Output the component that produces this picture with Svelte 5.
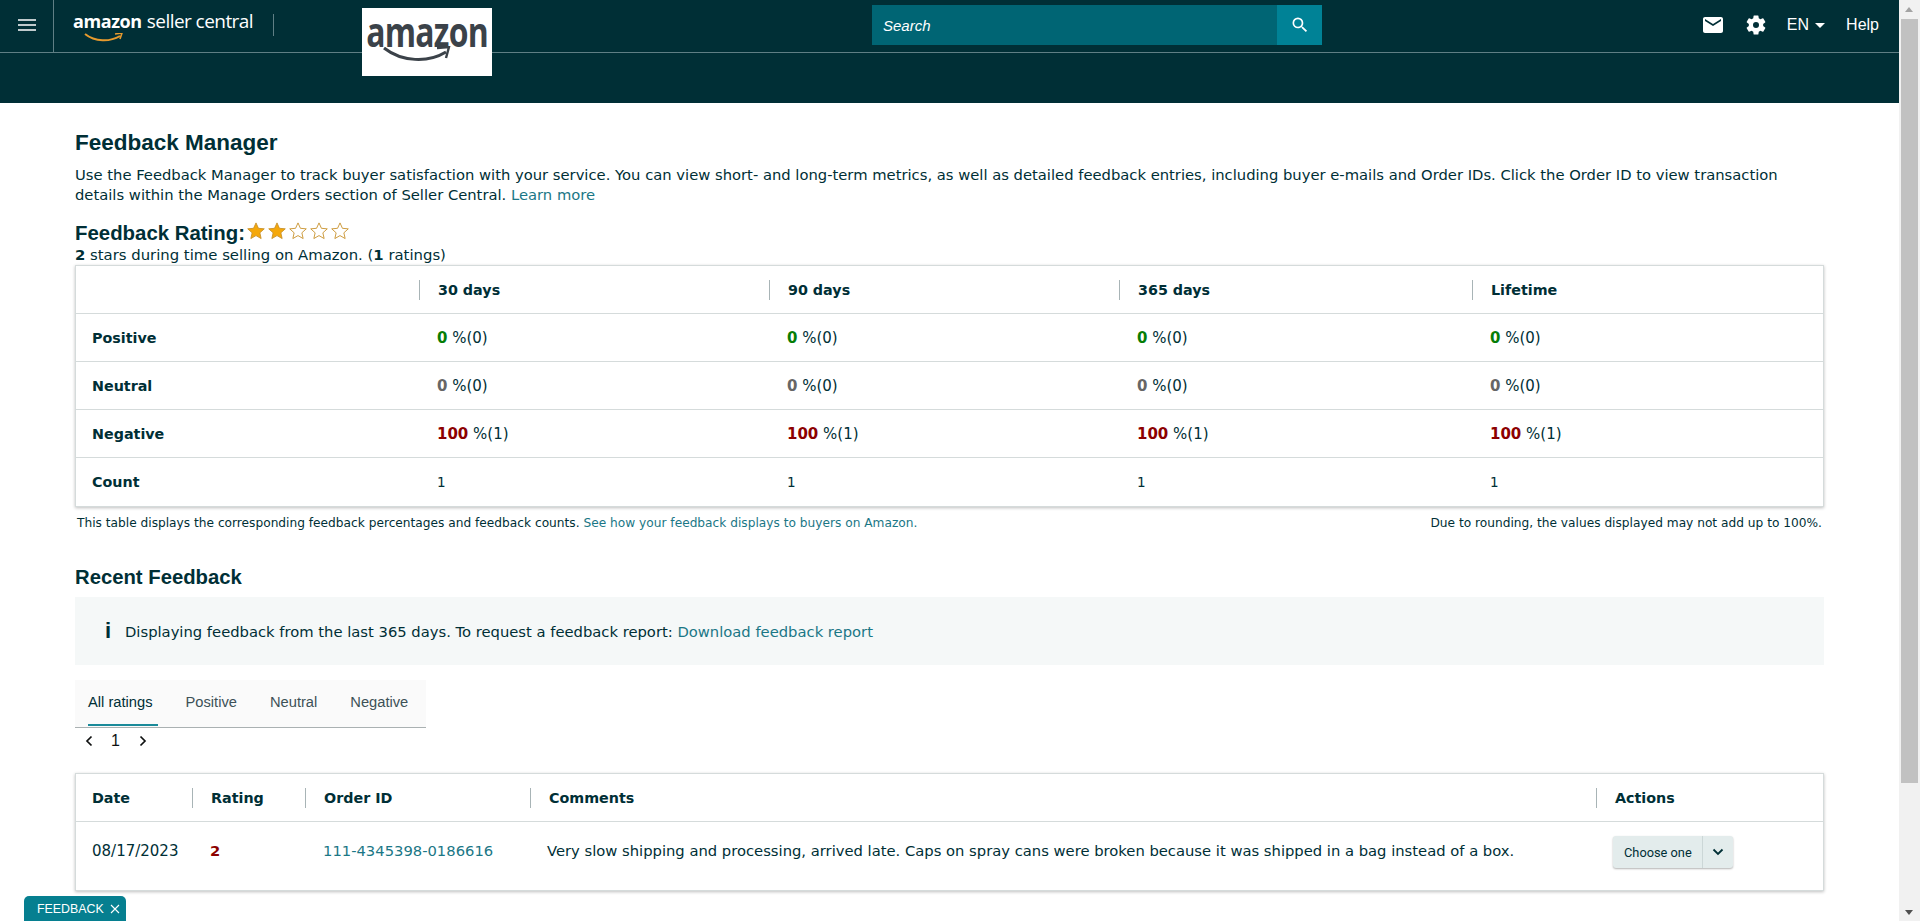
<script>
  const stars = [true, true, false, false, false];
  const periods = ["30 days", "90 days", "365 days", "Lifetime"];
  const rows = [
    { label: "Positive", value: "0", tone: "good", rest: "%(0)" },
    { label: "Neutral", value: "0", tone: "flat", rest: "%(0)" },
    { label: "Negative", value: "100", tone: "bad", rest: "%(1)" }
  ];
  const tabs = ["All ratings", "Positive", "Neutral", "Negative"];
</script>

<div class="screen">
  <div class="page">
    <header class="top">
      <div class="bar">
        <button class="menu" aria-label="Menu">
          <svg width="18" height="12" viewBox="0 0 18 12"><path d="M0 1h18M0 6h18M0 11h18" stroke="#fff" stroke-width="1.6" /></svg>
        </button>
        <div class="brand">
          <div class="wordmark">
            <span class="am">amazon</span><span class="sc">seller central</span>
            <svg class="smile" width="40" height="10" viewBox="0 0 40 10"><path d="M1 1c10 8 25 8 35 2" fill="none" stroke="#e69a2e" stroke-width="2" /><path d="M31 1l7-1-2 6" fill="none" stroke="#e69a2e" stroke-width="1.6" /></svg>
          </div>
        </div>
        <div class="logo-box">
          <span class="logo-text">amazon</span>
          <svg class="logo-smile" width="70" height="18" viewBox="0 0 70 18"><path d="M2 2c18 14 44 15 62 4" fill="none" stroke="#3b4249" stroke-width="3" /><path d="M55 2l12-1-3 11" fill="none" stroke="#3b4249" stroke-width="2.4" /></svg>
        </div>
        <div class="search">
          <span class="search-label">Search</span>
          <span class="search-btn">
            <svg width="20" height="20" viewBox="0 0 24 24"><path fill="#fff" d="M15.5 14h-.79l-.28-.27A6.47 6.47 0 0 0 16 9.5 6.5 6.5 0 1 0 9.5 16c1.61 0 3.09-.59 4.23-1.57l.27.28v.79l5 4.99L20.49 19l-4.99-5zm-6 0C7.01 14 5 11.99 5 9.5S7.01 5 9.5 5 14 7.01 14 9.5 11.99 14 9.5 14z" /></svg>
          </span>
        </div>
        <nav class="tools">
          <svg class="mail" width="24" height="24" viewBox="0 0 24 24"><path fill="#fff" d="M20 4H4c-1.1 0-2 .9-2 2v12c0 1.1.9 2 2 2h16c1.1 0 2-.9 2-2V6c0-1.1-.9-2-2-2zm0 4l-8 5-8-5V6l8 5 8-5v2z" /></svg>
          <svg class="gear" width="24" height="24" viewBox="0 0 24 24"><path fill="#fff" fill-rule="evenodd" d="M19.14 12.94c.04-.3.06-.61.06-.94s-.02-.64-.07-.94l2.03-1.58a.49.49 0 0 0 .12-.61l-1.92-3.32a.49.49 0 0 0-.59-.22l-2.39.96a7 7 0 0 0-1.62-.94l-.36-2.54a.48.48 0 0 0-.48-.41h-3.84a.47.47 0 0 0-.47.41l-.36 2.54c-.59.24-1.13.57-1.62.94l-2.39-.96a.48.48 0 0 0-.59.22L2.74 8.87a.47.47 0 0 0 .12.61l2.03 1.58c-.05.3-.09.63-.09.94s.02.64.07.94l-2.03 1.58a.49.49 0 0 0-.12.61l1.92 3.32c.12.22.37.29.59.22l2.39-.96c.5.38 1.03.7 1.62.94l.36 2.54c.05.24.24.41.48.41h3.84c.24 0 .44-.17.47-.41l.36-2.54c.59-.24 1.13-.56 1.62-.94l2.39.96c.22.08.47 0 .59-.22l1.92-3.32a.47.47 0 0 0-.12-.61l-2.01-1.58zM12 15a3 3 0 1 1 0-6 3 3 0 0 1 0 6z" /></svg>
          <span class="lang">EN<i class="caret"></i></span>
          <span class="help">Help</span>
        </nav>
      </div>
    </header>

    <main class="content">
      <h1>Feedback Manager</h1>
      <p class="intro">
        Use the Feedback Manager to track buyer satisfaction with your service. You can view short- and long-term metrics, as well as detailed feedback entries, including buyer e-mails and Order IDs. Click the Order ID to view transaction details within the Manage Orders section of Seller Central.
        <a href="#learn">Learn more</a>
      </p>

      <div class="rating">
        <h2>Feedback Rating:</h2>
        <div class="stars">
          {#each stars as on}
            <svg width="18" height="18" viewBox="0 0 20 20">
              <polygon points="10,1 12.7,7 19.2,7.6 14.3,12 15.7,18.4 10,15.1 4.3,18.4 5.7,12 0.8,7.6 7.3,7" fill={on ? "#f5a80a" : "#fff"} stroke="#c8922c" stroke-width="1" />
            </svg>
          {/each}
        </div>
      </div>
      <div class="summary"><b>2</b> stars during time selling on Amazon. (<b>1</b> ratings)</div>

      <section class="card metrics">
        <div class="mrow head">
          <div class="cell"></div>
          {#each periods as p}
            <div class="cell th"><span>{p}</span></div>
          {/each}
        </div>
        {#each rows as r}
          <div class="mrow">
            <div class="cell label">{r.label}</div>
            {#each periods as p}
              <div class="cell val"><b class={r.tone}>{r.value}</b> {r.rest}</div>
            {/each}
          </div>
        {/each}
        <div class="mrow">
          <div class="cell label">Count</div>
          {#each periods as p}
            <div class="cell val count">1</div>
          {/each}
        </div>
      </section>
      <div class="notes">
        <span>This table displays the corresponding feedback percentages and feedback counts. <a href="#see">See how your feedback displays to buyers on Amazon.</a></span>
        <span>Due to rounding, the values displayed may not add up to 100%.</span>
      </div>

      <h2 class="recent">Recent Feedback</h2>
      <div class="info">
        <span class="info-i">i</span>
        <span>Displaying feedback from the last 365 days. To request a feedback report: <a href="#dl">Download feedback report</a></span>
      </div>

      <div class="tabs">
        {#each tabs as t, i}
          <span class="tab" class:active={i === 0}>{t}</span>
        {/each}
      </div>
      <div class="pager">
        <svg width="10" height="12" viewBox="0 0 10 12"><path d="M7.5 1.5L3 6l4.5 4.5" fill="none" stroke="#0f1111" stroke-width="1.7" /></svg>
        <span>1</span>
        <svg width="10" height="12" viewBox="0 0 10 12"><path d="M2.5 1.5L7 6l-4.5 4.5" fill="none" stroke="#0f1111" stroke-width="1.7" /></svg>
      </div>

      <section class="card orders">
        <div class="orow head">
          <div class="cell th"><span>Date</span></div>
          <div class="cell th"><span>Rating</span></div>
          <div class="cell th"><span>Order ID</span></div>
          <div class="cell th"><span>Comments</span></div>
          <div class="cell th"><span>Actions</span></div>
        </div>
        <div class="orow body">
          <div class="cell">08/17/2023</div>
          <div class="cell"><b class="bad">2</b></div>
          <div class="cell"><a href="#order">111-4345398-0186616</a></div>
          <div class="cell">Very slow shipping and processing, arrived late. Caps on spray cans were broken because it was shipped in a bag instead of a box.</div>
          <div class="cell">
            <div class="choose">
              <span class="choose-text">Choose one</span>
              <span class="choose-arrow">
                <svg width="12" height="8" viewBox="0 0 12 8"><path d="M1.5 1.5L6 6l4.5-4.5" fill="none" stroke="#002f36" stroke-width="1.8" /></svg>
              </span>
            </div>
          </div>
        </div>
      </section>
    </main>

    <div class="feedback-tab">FEEDBACK
      <svg width="10" height="10" viewBox="0 0 10 10"><path d="M1 1l8 8M9 1l-8 8" stroke="#fff" stroke-width="1.1" /></svg>
    </div>
  </div>

  <div class="scrollbar">
    <span class="arrow up"></span>
    <span class="thumb"></span>
    <span class="arrow down"></span>
  </div>
</div>

<style>
  :global(html),
  :global(body) {
    margin: 0;
    background: #fff;
    overflow: hidden;
  }

  .screen {
    display: flex;
    height: 100vh;
    overflow: hidden;
    font-family: "DejaVu Sans", Verdana, sans-serif;
    font-size: 14.75px;
    color: #002f36;
  }

  .page {
    position: relative;
    flex: 1;
    min-width: 0;
    overflow: hidden;
  }

  a {
    color: #1b7786;
    text-decoration: none;
  }

  .top {
    height: 103px;
    background: #002f36;
    box-sizing: border-box;
  }

  .bar {
    position: relative;
    display: flex;
    align-items: center;
    height: 53px;
    box-sizing: border-box;
    border-bottom: 1px solid #5f7f85;
  }

  .menu {
    width: 54px;
    height: 52px;
    padding: 0;
    background: none;
    border: none;
    border-right: 1px solid #5f7f85;
    box-sizing: border-box;
    flex: none;
  }

  .brand {
    width: 220px;
    height: 22px;
    margin-top: -3px;
    padding-left: 19px;
    box-sizing: border-box;
    border-right: 1px solid #5f7f85;
    flex: none;
  }

  .wordmark {
    position: relative;
    color: #fff;
    font-family: "Open Sans", sans-serif;
    white-space: nowrap;
    line-height: 20px;
    margin-top: -3px;
  }

  .am {
    font-size: 18px;
    font-weight: 700;
    letter-spacing: -0.4px;
    margin-right: 5px;
  }

  .sc {
    font-size: 19px;
    letter-spacing: -0.55px;
  }

  .smile {
    position: absolute;
    left: 11px;
    top: 22px;
  }

  .logo-box {
    position: absolute;
    left: 362px;
    top: 8px;
    width: 130px;
    height: 68px;
    display: flex;
    justify-content: center;
    background: #fff;
    z-index: 2;
  }

  .logo-text {
    flex: none;
    color: #3b4249;
    font-family: "Open Sans", sans-serif;
    font-size: 42px;
    font-weight: 700;
    line-height: 46px;
    letter-spacing: -1px;
    white-space: nowrap;
    transform: scaleX(0.76);
  }

  .logo-smile {
    position: absolute;
    left: 20px;
    top: 38px;
  }

  .search {
    position: absolute;
    left: 872px;
    top: 5px;
    width: 450px;
    height: 40px;
    display: flex;
    align-items: center;
    background: #006574;
    color: #fff;
  }

  .search-label {
    flex: 1;
    padding-left: 11px;
    font-family: "Liberation Sans", Arial, sans-serif;
    font-size: 15px;
    font-style: italic;
  }

  .search-btn {
    width: 45px;
    height: 40px;
    display: flex;
    align-items: center;
    justify-content: center;
    background: #008296;
  }

  .tools {
    margin-left: auto;
    display: flex;
    align-items: center;
    color: #fff;
    font-family: "Liberation Sans", Arial, sans-serif;
    font-size: 16px;
    padding-right: 20px;
    margin-top: -2px;
  }

  .mail {
    margin-right: 19px;
  }

  .gear {
    margin-right: 19px;
  }

  .lang {
    display: flex;
    align-items: center;
    margin-right: 21px;
  }

  .caret {
    margin-left: 6px;
    border-left: 5px solid transparent;
    border-right: 5px solid transparent;
    border-top: 5px solid #fff;
  }

  .content {
    padding: 28px 75px 0;
    width: 1749px;
    box-sizing: content-box;
  }

  h1,
  h2 {
    margin: 0;
    font-family: "Liberation Sans", Arial, sans-serif;
    font-weight: 700;
    font-size: 22.5px;
    line-height: 24px;
  }

  .intro {
    margin: 10px 0 0;
    line-height: 20px;
  }

  .rating {
    display: flex;
    align-items: center;
    margin-top: 16px;
    height: 24px;
  }

  .rating h2 {
    font-size: 20.4px;
  }

  .stars {
    display: flex;
    gap: 3px;
    margin: -4px 0 0 2px;
  }

  .summary {
    line-height: 16px;
    margin-top: 2px;
    font-size: 14.85px;
  }

  .summary b {
    font-weight: 700;
  }

  .card {
    background: #fff;
    border: 1px solid #d5dbdb;
    box-shadow: 0 1px 3px rgba(0, 0, 0, 0.25);
  }

  .metrics {
    margin-top: 2px;
  }

  .mrow {
    display: grid;
    grid-template-columns: 343px 350px 350px 353px 1fr;
    height: 48px;
    align-items: center;
    border-bottom: 1px solid #d5dbdb;
    box-sizing: border-box;
  }

  .mrow:last-child {
    border-bottom: none;
  }

  .cell {
    padding-left: 16px;
    min-width: 0;
  }

  .th {
    font-weight: 700;
    font-size: 14.3px;
    padding-left: 0;
  }

  .th span {
    display: block;
    padding-left: 18px;
    line-height: 20px;
    border-left: 1px solid #a8b4b6;
  }

  .label {
    font-weight: 700;
    font-size: 14.3px;
  }

  .val {
    padding-left: 18px;
    font-size: 15px;
  }

  .val.count {
    font-size: 13.5px;
  }

  .good {
    color: #067d06;
  }

  .flat {
    color: #666;
  }

  .bad {
    color: #8c0000;
  }

  .notes {
    display: flex;
    justify-content: space-between;
    margin-top: 9px;
    padding: 0 2px;
    font-size: 12.2px;
    line-height: 14px;
  }

  .recent {
    margin-top: 35px;
    font-size: 20.3px;
  }

  .info {
    display: flex;
    align-items: center;
    height: 68px;
    margin-top: 8px;
    padding-left: 30px;
    background: #f5f8f8;
  }

  .info-i {
    width: 20px;
    font-family: "Liberation Sans", Arial, sans-serif;
    font-size: 22px;
    font-weight: 700;
  }

  .tabs {
    display: flex;
    width: 351px;
    height: 48px;
    margin-top: 15px;
    padding-left: 13px;
    gap: 28px;
    box-sizing: border-box;
    background: #fafafa;
    border-bottom: 1px solid #aab1b2;
    font-family: "Liberation Sans", Arial, sans-serif;
    font-size: 14.7px;
    color: #3d5157;
  }

  .tab {
    height: 46px;
    padding-right: 5px;
    line-height: 45px;
    box-sizing: border-box;
  }

  .tab.active {
    color: #002f36;
    border-bottom: 2px solid #1a8a99;
  }

  .pager {
    display: flex;
    align-items: center;
    gap: 17px;
    height: 26px;
    padding-left: 9px;
    font-family: "Liberation Sans", Arial, sans-serif;
    font-size: 16px;
    color: #0f1111;
  }

  .pager svg:last-child {
    margin-left: 1px;
  }

  .orders {
    margin-top: 19px;
  }

  .orow {
    display: grid;
    grid-template-columns: 116px 113px 225px 1066px 1fr;
    align-items: center;
    box-sizing: border-box;
  }

  .orow.head {
    height: 48px;
    border-bottom: 1px solid #d5dbdb;
  }

  .orow.head .cell:first-child span {
    border-left: none;
    padding-left: 16px;
  }

  .orow.body {
    height: 68px;
  }

  .orow.body .cell {
    padding-left: 18px;
    margin-top: -12px;
  }

  .orow.body .cell:first-child {
    padding-left: 16px;
    margin-top: -10px;
    font-size: 15px;
  }

  .orow.body .cell:nth-child(4) {
    padding-left: 17px;
  }

  .orow.body .cell:last-child {
    padding-left: 17px;
    margin-top: -8px;
  }

  .choose {
    display: flex;
    width: 120px;
    height: 32px;
    background: #e3ecec;
    border-radius: 3px;
    box-shadow: 0 1px 2px rgba(0, 0, 0, 0.3);
    font-family: Roboto, sans-serif;
    font-size: 12.8px;
    align-items: stretch;
  }

  .choose-text {
    display: flex;
    align-items: center;
    width: 90px;
    padding-left: 11px;
    box-sizing: border-box;
    white-space: nowrap;
    border-right: 1px solid #ccd7d7;
  }

  .choose-arrow {
    display: flex;
    align-items: center;
    justify-content: center;
    flex: 1;
  }

  .feedback-tab {
    position: absolute;
    left: 24px;
    bottom: 0;
    width: 102px;
    height: 25px;
    display: flex;
    align-items: center;
    gap: 6px;
    padding-left: 13px;
    box-sizing: border-box;
    border-radius: 5px 5px 0 0;
    background: #067f90;
    color: #fff;
    font-family: "Liberation Sans", Arial, sans-serif;
    font-size: 12.4px;
  }

  .scrollbar {
    width: 21px;
    flex: none;
    position: relative;
    background: #f1f1f1;
    display: flex;
    flex-direction: column;
    align-items: center;
  }

  .thumb {
    width: 17px;
    height: 764px;
    background: #c1c1c1;
  }

  .arrow {
    height: 19px;
    width: 100%;
    position: relative;
    flex: none;
  }

  .arrow::after {
    content: "";
    position: absolute;
    left: 6px;
    border-left: 4px solid transparent;
    border-right: 4px solid transparent;
  }

  .up::after {
    top: 7px;
    border-bottom: 5px solid #a3a3a3;
  }

  .down {
    margin-top: auto;
  }

  .down::after {
    bottom: 6px;
    border-top: 5px solid #505050;
  }
</style>
